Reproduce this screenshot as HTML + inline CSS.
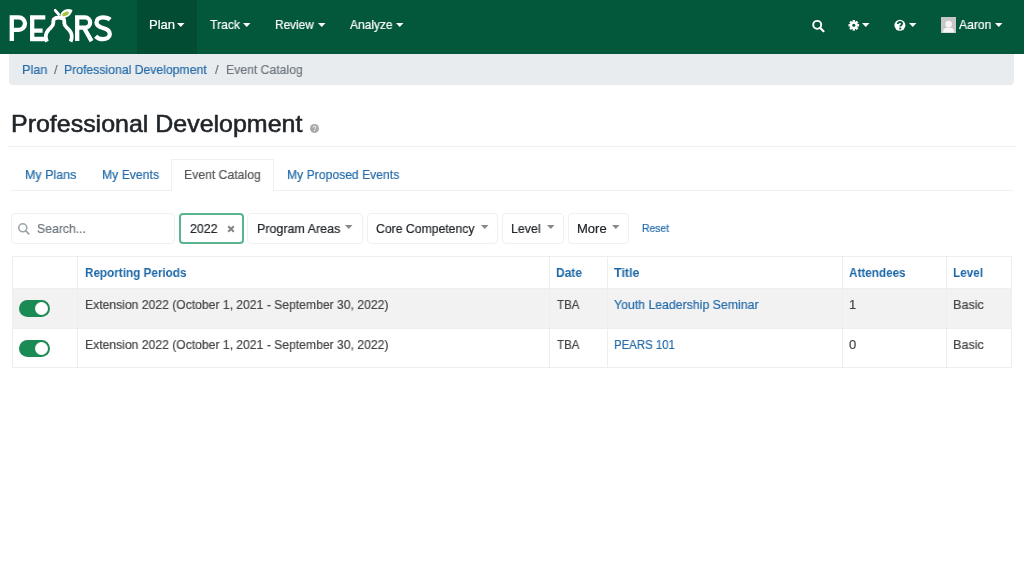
<!DOCTYPE html>
<html><head><meta charset="utf-8">
<style>
*{margin:0;padding:0;box-sizing:border-box}
html,body{width:1024px;height:568px;overflow:hidden;background:#fff;font-family:"Liberation Sans",sans-serif;position:relative}
.a{position:absolute}
.t{position:absolute;white-space:nowrap;line-height:1;transform-origin:0 0;transform:scaleX(var(--s,1));will-change:transform;-webkit-text-stroke:.2px currentColor}
.nav{left:0;top:0;width:1024px;height:54px;background:#03573b}
.navact{left:137px;top:0;width:60px;height:54px;background:#024c34}
.nt{color:#fff;font-size:13px;top:18px}
.caret{position:absolute;width:7.5px;height:4px;background:#fff;clip-path:polygon(0 0,100% 0,50% 100%);top:23px}
.bc{left:9px;top:54px;width:1004.5px;height:31px;background:#e9ecef;border-radius:0 0 4px 4px}
.lk{color:#246ba9}
.bt{font-size:13px;top:63px}
.h1{font-size:24px;color:#212529;top:112.3px;-webkit-text-stroke:.55px #212529}
.hr{left:7px;top:146px;width:1009px;height:1px;background:#f0f1f2}
.tab{font-size:13px;top:168px}
.tabline{left:11px;top:190px;width:1002px;height:1px;background:#eff0f1}
.acttab{left:171px;top:159px;width:103px;height:32px;border:1px solid #eef0f1;border-bottom:none;background:#fff}
.box{position:absolute;top:213px;height:31px;border:1px solid #eef0f1;border-radius:4px;background:#fff}
.ft{font-size:13px;top:222px;color:#212529}
.fc{position:absolute;width:7.5px;height:4px;background:#888;clip-path:polygon(0 0,100% 0,50% 100%);top:225px}
.tbl{left:12px;top:256px;width:1000px;height:112px;border:1px solid #eceef0}
.row1{left:13px;top:288px;width:998px;height:40px;background:#f2f2f2}
.hl{left:13px;height:1px;width:998px;background:#eceef0}
.vl{top:257px;width:1px;height:110px;background:#eceef0}
.th{font-size:13px;font-weight:bold;color:#1c68a8;top:266px;-webkit-text-stroke:0}
.td{font-size:13px;color:#444}
.td.lk{color:#246ba9}
.tog{position:absolute;left:19px;width:31px;height:17px;border-radius:9px;background:#1b8a55}
.tog:after{content:"";position:absolute;right:2px;top:2px;width:13px;height:13px;border-radius:50%;background:#fff}
</style></head><body>
<div class="a nav"></div>
<div class="a navact"></div>
<!-- logo -->
<svg class="a" style="left:0;top:0" width="130" height="54" viewBox="0 0 130 54">
  <g fill="none" stroke="#fff" stroke-width="4.3" stroke-linejoin="miter">
    <path d="M11.8 41.1V17.3h6.9a6.3 6.3 0 0 1 0 12.6h-6.9"/>
    <path d="M45.3 17.4H32.2V39H45.6M32.2 30.7H42.6"/>
    <path d="M77.2 41.1V17.4H85a5.15 5.15 0 0 1 0 10.3H77.2M84 27.7L91.6 41.1"/>
    <path d="M110.2 19.6C108.2 17.9 105.6 17.3 103 17.3 99 17.3 96.5 19.5 96.5 22.5 96.5 26 99.5 27 103 28 107 29 109.8 30.5 109.8 34 109.8 37.3 106.8 39.2 102.8 39.2 99.8 39.2 97.5 38.2 95.6 36.2"/>
  </g>
  <g fill="none" stroke="#fff">
    <path d="M47 41.6C45.3 38 45.5 33.5 48.2 30.2 50.5 27.5 53.3 26.5 53.3 23.2V21.2C53.3 18.8 55.8 17.6 58.8 17.6 61.8 17.6 64.3 18.8 64.3 21.2V23.2C64.3 26.5 67.1 27.5 69.4 30.2 72.1 33.5 72.3 38 70.6 41.6" stroke-width="3.8"/>
    <path d="M55.2 10.3L58.8 14.5" stroke-width="2.8" stroke-linecap="round"/>
  </g>
  <path d="M60.2 16.6C60.6 10.2 67 7.4 72.4 10 72 15 64.5 20.5 60.2 16.6Z" fill="#fff"/>
  <ellipse cx="65.6" cy="13.8" rx="3.6" ry="1.8" transform="rotate(-25 65.6 13.8)" fill="#a3c53a"/>
</svg>
<div class="t nt" style="left:149px">Plan</div><div class="caret" style="left:177px"></div>
<div class="t nt" style="--s:.94;left:210px">Track</div><div class="caret" style="left:243px"></div>
<div class="t nt" style="--s:.91;left:275px">Review</div><div class="caret" style="left:318px"></div>
<div class="t nt" style="--s:.92;left:350px">Analyze</div><div class="caret" style="left:396px"></div>
<!-- right icons -->
<svg class="a" style="left:810px;top:18px" width="18" height="16" viewBox="0 0 18 16">
  <circle cx="7.2" cy="6.85" r="4" fill="none" stroke="#fff" stroke-width="1.9"/>
  <path d="M10.3 10l3.2 3.2" stroke="#fff" stroke-width="2.2" stroke-linecap="round"/>
</svg>
<svg class="a" style="left:846px;top:18px" width="16" height="16" viewBox="0 0 16 16">
  <g transform="translate(7.8,7.3)" fill="#fff">
    <circle r="3.7"/>
    <rect x="-1.25" y="-5.3" width="2.5" height="10.6"/>
    <rect x="-1.25" y="-5.3" width="2.5" height="10.6" transform="rotate(45)"/>
    <rect x="-1.25" y="-5.3" width="2.5" height="10.6" transform="rotate(90)"/>
    <rect x="-1.25" y="-5.3" width="2.5" height="10.6" transform="rotate(135)"/>
  </g>
  <circle cx="7.8" cy="7.3" r="1.5" fill="#03573b"/>
</svg>
<div class="caret" style="left:862px"></div>
<svg class="a" style="left:893px;top:19px" width="14" height="14" viewBox="0 0 14 14">
  <circle cx="6.9" cy="6.3" r="5.5" fill="#fff"/>
  <path d="M4.8 5.1c0-1.2.9-2.1 2.1-2.1s2.1.8 2.1 1.8c0 1.3-1.7 1.4-1.7 2.8" fill="none" stroke="#03573b" stroke-width="1.9"/>
  <rect x="6.3" y="8.6" width="1.9" height="1.8" fill="#03573b"/>
</svg>
<div class="caret" style="left:909px"></div>
<svg class="a" style="left:941px;top:17px" width="15" height="16" viewBox="0 0 15 16">
  <rect width="15" height="16" fill="#c9c6c7"/>
  <circle cx="7.6" cy="6.9" r="3.2" fill="#f6f6f6"/>
  <path d="M2 15.6c0-3.2 1.5-5 5.6-5s5.6 1.8 5.6 5z" fill="#f6f6f6"/>
</svg>
<div class="t nt" style="--s:.93;left:959px">Aaron</div><div class="caret" style="left:995px"></div>

<!-- breadcrumb -->
<div class="a bc"></div>
<div class="t bt lk" style="--s:.975;left:22px">Plan</div>
<div class="t bt" style="left:53.5px;color:#6c757d">/</div>
<div class="t bt lk" style="--s:.94;left:64px">Professional Development</div>
<div class="t bt" style="left:215px;color:#6c757d">/</div>
<div class="t bt" style="--s:.94;left:226px;color:#6c757d">Event Catalog</div>

<!-- title -->
<div class="t h1" style="--s:1.04;left:11px">Professional Development</div>
<svg class="a" style="left:310px;top:124px" width="9" height="9" viewBox="0 0 9 9">
  <circle cx="4.5" cy="4.5" r="4.5" fill="#a9a9a9"/>
  <path d="M3.1 3.6c0-.9.6-1.5 1.4-1.5.8 0 1.4.5 1.4 1.2 0 .9-1.1 1-1.1 2" fill="none" stroke="#fff" stroke-width="1"/>
  <rect x="4.2" y="6.1" width="1" height="1" fill="#fff"/>
</svg>
<div class="a hr"></div>

<!-- tabs -->
<div class="a tabline"></div>
<div class="a acttab"></div>
<div class="t tab lk" style="--s:.96;left:24.5px">My Plans</div>
<div class="t tab lk" style="--s:.94;left:101.5px">My Events</div>
<div class="t tab" style="--s:.94;left:184px;color:#555">Event Catalog</div>
<div class="t tab lk" style="--s:.936;left:287px">My Proposed Events</div>

<!-- filters -->
<div class="box" style="left:11px;width:164px"></div>
<svg class="a" style="left:17px;top:222px" width="14" height="14" viewBox="0 0 14 14">
  <circle cx="5.8" cy="5.8" r="4" fill="none" stroke="#9aa5ad" stroke-width="1.6"/>
  <path d="M8.8 8.8l3 3" stroke="#9aa5ad" stroke-width="1.8" stroke-linecap="round"/>
</svg>
<div class="t ft" style="--s:.94;left:36.5px;color:#6c757d">Search...</div>
<div class="box" style="left:179px;width:65px;border:2px solid #5ab48e"></div>
<div class="t ft" style="--s:.95;left:190px">2022</div>
<svg class="a" style="left:227px;top:225px" width="8" height="8" viewBox="0 0 8 8"><path d="M1.2 1.2l5.6 5.6M6.8 1.2l-5.6 5.6" stroke="#858585" stroke-width="2"/></svg>
<div class="box" style="left:247px;width:116px"></div>
<div class="t ft" style="--s:.96;left:256.5px">Program Areas</div><div class="fc" style="left:345px"></div>
<div class="box" style="left:367px;width:131px"></div>
<div class="t ft" style="--s:.94;left:376px">Core Competency</div><div class="fc" style="left:481px"></div>
<div class="box" style="left:502px;width:62px"></div>
<div class="t ft" style="--s:.95;left:511px">Level</div><div class="fc" style="left:547px"></div>
<div class="box" style="left:568px;width:61px"></div>
<div class="t ft" style="left:577px">More</div><div class="fc" style="left:612px"></div>
<div class="t lk" style="--s:.94;left:642px;top:223px;font-size:11px">Reset</div>

<!-- table -->
<div class="a tbl"></div>
<div class="a row1"></div>
<div class="a hl" style="top:288px"></div>
<div class="a hl" style="top:328px"></div>
<div class="a vl" style="left:77px"></div>
<div class="a vl" style="left:549px"></div>
<div class="a vl" style="left:607px"></div>
<div class="a vl" style="left:842px"></div>
<div class="a vl" style="left:946px"></div>
<div class="t th" style="--s:.90;left:84.5px">Reporting Periods</div>
<div class="t th" style="--s:.92;left:556px">Date</div>
<div class="t th" style="--s:.96;left:614px">Title</div>
<div class="t th" style="--s:.90;left:849px">Attendees</div>
<div class="t th" style="--s:.90;left:953px">Level</div>

<div class="tog" style="top:300px"></div>
<div class="t td" style="--s:.935;left:85px;top:298px">Extension 2022 (October 1, 2021 - September 30, 2022)</div>
<div class="t td" style="--s:.89;left:557px;top:298px">TBA</div>
<div class="t td lk" style="--s:.946;left:614px;top:298px">Youth Leadership Seminar</div>
<div class="t td" style="left:849px;top:298px">1</div>
<div class="t td" style="--s:.97;left:953px;top:298px">Basic</div>

<div class="tog" style="top:340px"></div>
<div class="t td" style="--s:.935;left:85px;top:338px">Extension 2022 (October 1, 2021 - September 30, 2022)</div>
<div class="t td" style="--s:.89;left:557px;top:338px">TBA</div>
<div class="t td lk" style="--s:.876;left:614px;top:338px">PEARS 101</div>
<div class="t td" style="left:849px;top:338px">0</div>
<div class="t td" style="--s:.97;left:953px;top:338px">Basic</div>
</body></html>
